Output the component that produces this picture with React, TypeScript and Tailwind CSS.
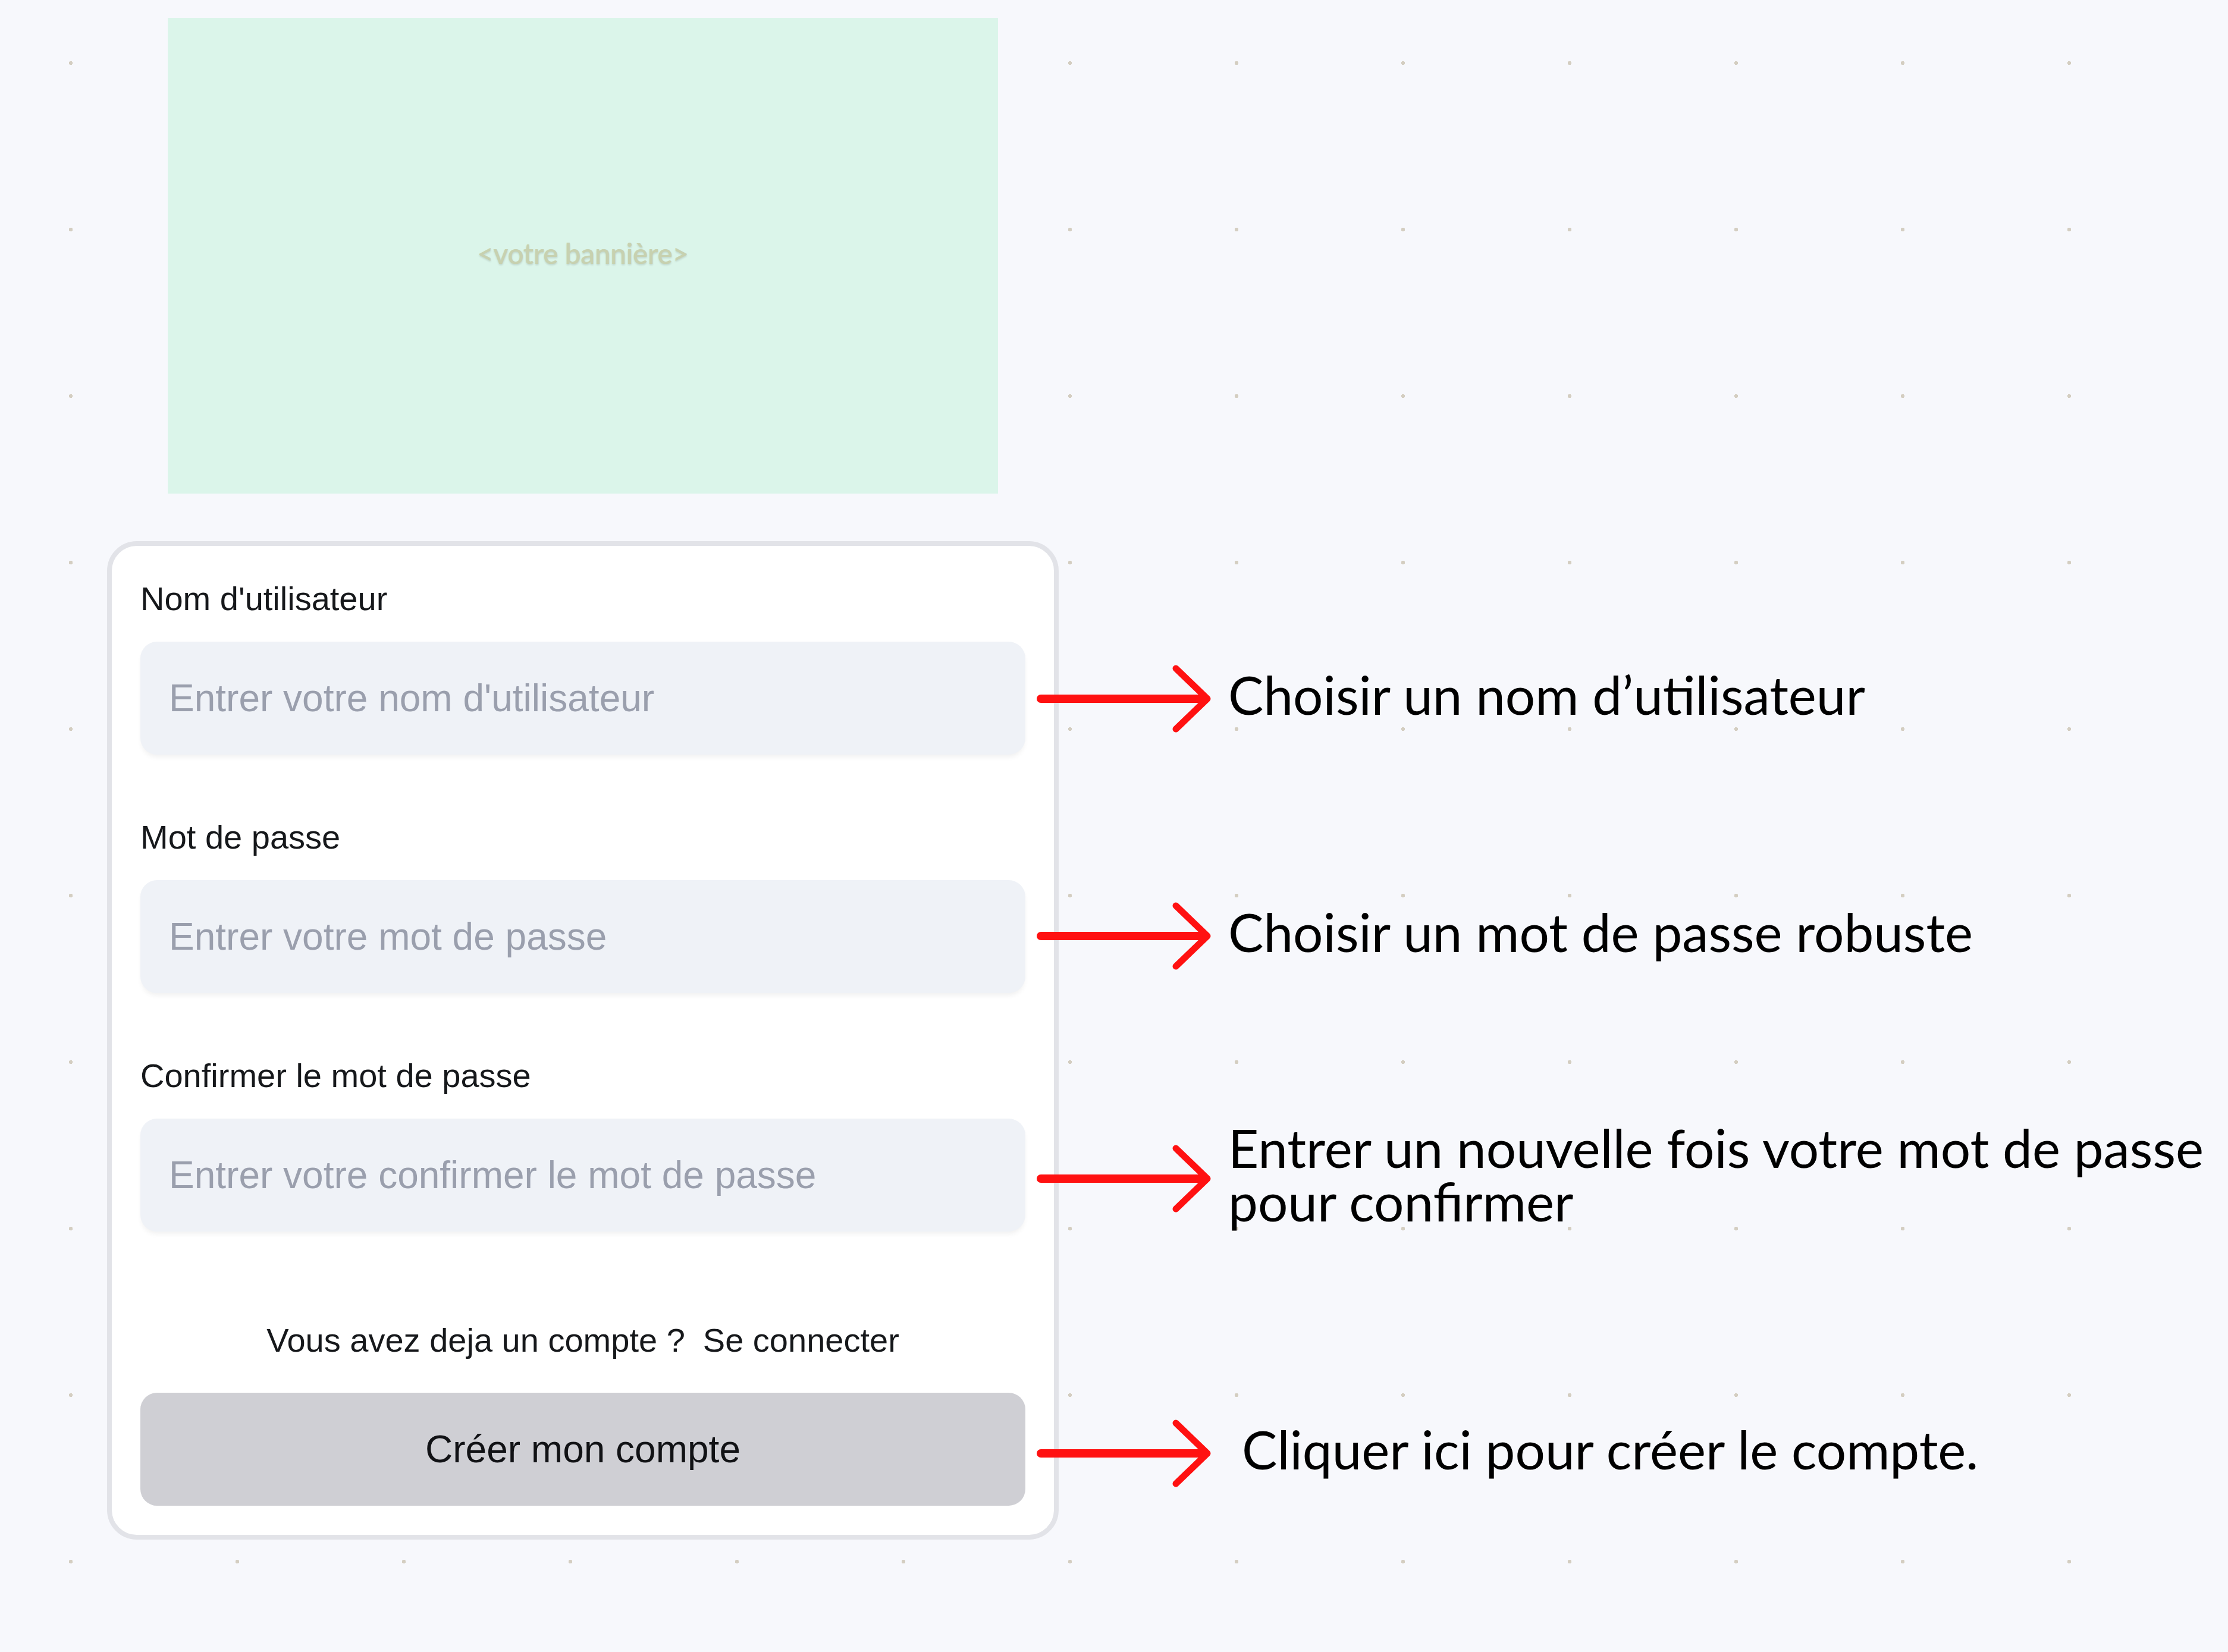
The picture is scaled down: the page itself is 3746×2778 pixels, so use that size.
const fields = [
  { label: "Nom d'utilisateur", placeholder: "Entrer votre nom d'utilisateur", type: "text" },
  { label: "Mot de passe", placeholder: "Entrer votre mot de passe", type: "password" },
  { label: "Confirmer le mot de passe", placeholder: "Entrer votre confirmer le mot de passe", type: "password" },
]

function Arrow() {
  return (
    <svg width="295" height="120" viewBox="0 0 295 120" className="shrink-0">
      <path d="M7 60 H284" stroke="#ff1111" strokeWidth="14" strokeLinecap="round" fill="none" />
      <path d="M234 9 L287 60 L234 111" stroke="#ff1111" strokeWidth="11" strokeLinecap="round" strokeLinejoin="round" fill="none" />
    </svg>
  )
}

function Note({ lines, className }: { lines: string[]; className: string }) {
  return (
    <div className={`flex items-center ${className}`}>
      <Arrow />
      <p className="ml-[27px] pb-[14px] whitespace-nowrap font-['Lato','Noto_Sans',sans-serif] text-[89px] leading-[90px] text-black">
        {lines.map((l, i) => (
          <span key={i} className="block">
            {l}
          </span>
        ))}
      </p>
    </div>
  )
}

export default function App() {
  return (
    <div className="flex min-h-screen w-full overflow-hidden bg-[#f7f8fc] bg-[radial-gradient(circle,#d4cec1_3px,transparent_3.5px)] bg-[size:280px_280px] bg-[position:-21px_-34px] pl-[180px]">
      <div className="flex w-[1600px] shrink-0 flex-col items-center gap-[80px] pt-[30px]">
        <div className="flex h-[800px] w-[1396px] items-center justify-center bg-[#dbf5ea]">
          <span className="pb-[8px] font-['Lato',sans-serif] text-[48px] font-semibold tracking-[-0.5px] text-[#c7d1b0] [text-shadow:0_2px_3px_rgba(0,0,0,0.12)]">
            &lt;votre bannière&gt;
          </span>
        </div>

        <form className="flex w-full flex-col rounded-[50px] border-[8px] border-[#e2e3e8] bg-white px-[48px] pt-[57px] pb-[49px] font-['Liberation_Sans',Arial,sans-serif]">
          <div className="flex flex-col gap-[107px]">
            {fields.map((f) => (
              <label key={f.label} className="flex flex-col gap-[40px]">
                <span className="text-[56px] leading-[64px] text-[#16181b]">{f.label}</span>
                <input
                  type={f.type}
                  placeholder={f.placeholder}
                  className="h-[190px] w-full rounded-[28px] bg-[#eff2f7] px-[48px] text-[64px] text-[#16181b] shadow-[0_6px_8px_-2px_rgba(0,0,0,0.06)] outline-none placeholder:text-[#9a9fad]"
                />
              </label>
            ))}
          </div>

          <p className="mt-[151px] text-center text-[56px] leading-[64px] text-[#16181b]">
            Vous avez deja un compte ?<span className="ml-[30px]">Se connecter</span>
          </p>

          <button
            type="button"
            className="mt-[56px] h-[190px] w-full rounded-[28px] bg-[#cfcfd4] text-[64px] text-[#111215]"
          >
            Créer mon compte
          </button>
        </form>
      </div>

      <div className="-ml-[37px] flex flex-col pt-[976px]">
        <Note className="h-[398px]" lines={["Choisir un nom d’utilisateur"]} />
        <Note className="h-[400px]" lines={["Choisir un mot de passe robuste"]} />
        <Note className="h-[416px]" lines={["Entrer un nouvelle fois votre mot de passe", "pour confirmer"]} />
        <Note className="h-[508px] [&>p]:ml-[50px]" lines={["Cliquer ici pour créer le compte."]} />
      </div>
    </div>
  )
}
